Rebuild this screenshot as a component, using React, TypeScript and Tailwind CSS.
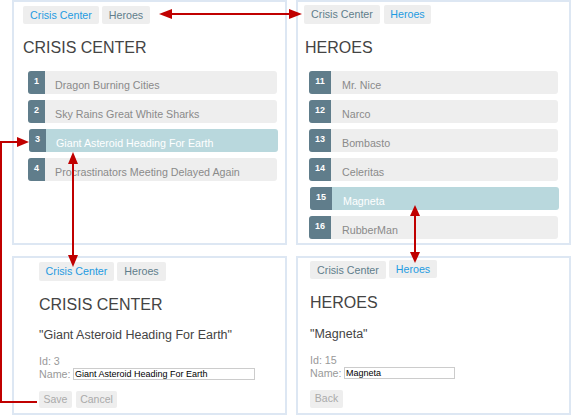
import React from "react";

type Item = { id: number; name: string };

const crises: Item[] = [
  { id: 1, name: "Dragon Burning Cities" },
  { id: 2, name: "Sky Rains Great White Sharks" },
  { id: 3, name: "Giant Asteroid Heading For Earth" },
  { id: 4, name: "Procrastinators Meeting Delayed Again" },
];

const heroes: Item[] = [
  { id: 11, name: "Mr. Nice" },
  { id: 12, name: "Narco" },
  { id: 13, name: "Bombasto" },
  { id: 14, name: "Celeritas" },
  { id: 15, name: "Magneta" },
  { id: 16, name: "RubberMan" },
];

function NavButton({ label, active, w }: { label: string; active?: boolean; w: string }) {
  return (
    <div
      className={`${w} h-full flex items-center justify-center rounded-[2px] bg-[#eeeeee] text-[10.7px] leading-none ${
        active ? "text-[#1e9be1]" : "text-[#607d8b]"
      }`}
    >
      {label}
    </div>
  );
}

function ItemList({ items, selected, badgeW, textGap }: { items: Item[]; selected: number; badgeW: string; textGap: string }) {
  return (
    <ul className="flex flex-col gap-[6px] w-[249px]">
      {items.map((item) => {
        const isSel = item.id === selected;
        return (
          <li
            key={item.id}
            className={`flex h-[23px] rounded-[3px] ${isSel ? "bg-[#b9d8dd] translate-x-px" : "bg-[#eeeeee]"}`}
          >
            <span
              className={`${badgeW} h-full shrink-0 rounded-l-[3px] bg-[#607d8b] text-white text-[9px] font-bold leading-[9px] pt-[6px] text-center`}
            >
              {item.id}
            </span>
            <span
              className={`${textGap} mt-[7.5px] text-[10.7px] leading-[12px] whitespace-nowrap ${
                isSel ? "text-white" : "text-[#8a8a8a]"
              }`}
            >
              {item.name}
            </span>
          </li>
        );
      })}
    </ul>
  );
}

function SmallButton({ label, w }: { label: string; w: string }) {
  return (
    <div className={`${w} h-full flex items-center justify-center rounded-[2px] bg-[#eeeeee] text-[10.5px] text-[#aaaaaa]`}>
      {label}
    </div>
  );
}

export default function App() {
  return (
    <div className="relative w-[571px] h-[417px] bg-white font-['Liberation_Sans',Arial,sans-serif] overflow-hidden">
      <div className="grid grid-cols-[275px_275px] grid-rows-[245px_159px] gap-x-[9px] gap-y-[11px] pl-[12px]">
        {/* Crisis list */}
        <div className="border-2 border-[#dde7f3]">
          <div className="ml-[9px] mt-[4px] h-[18px] flex gap-[3px]">
            <NavButton label="Crisis Center" active w="w-[76px]" />
            <NavButton label="Heroes" w="w-[48px]" />
          </div>
          <h2 className="ml-[9px] mt-[15.5px] text-[16px] leading-none text-[#444444]">CRISIS CENTER</h2>
          <div className="ml-[14px] mt-[15.5px]">
            <ItemList items={crises} selected={3} badgeW="w-[17px]" textGap="ml-[10px]" />
          </div>
        </div>

        {/* Hero list */}
        <div className="border-2 border-[#dde7f3]">
          <div className="ml-[6px] mt-[3px] h-[19px] flex gap-[4px]">
            <NavButton label="Crisis Center" w="w-[76px]" />
            <NavButton label="Heroes" active w="w-[47px]" />
          </div>
          <h2 className="ml-[7px] mt-[15.5px] text-[16px] leading-none text-[#444444]">HEROES</h2>
          <div className="ml-[11px] mt-[15.5px]">
            <ItemList items={heroes} selected={15} badgeW="w-[22px]" textGap="ml-[11px]" />
          </div>
        </div>

        {/* Crisis detail */}
        <div className="border-2 border-[#dde7f3]">
          <div className="ml-[25px] mt-[4px] h-[19px] flex gap-[3px]">
            <NavButton label="Crisis Center" active w="w-[75px]" />
            <NavButton label="Heroes" w="w-[49px]" />
          </div>
          <div className="ml-[25px]">
            <h2 className="mt-[15.5px] text-[16px] leading-none text-[#444444]">CRISIS CENTER</h2>
            <h3 className="mt-[16px] text-[12.5px] leading-none text-[#444444]">"Giant Asteroid Heading For Earth"</h3>
            <div className="mt-[14.4px] text-[10.7px] leading-[12px] text-[#999999]">Id: 3</div>
            <div className="flex items-center h-[13px] text-[10.7px] leading-[12px] text-[#999999]">
              <span>Name:</span>
              <input
                readOnly
                value="Giant Asteroid Heading For Earth"
                className="ml-[2.5px] w-[182px] h-[12px] border border-[#cccccc] bg-white px-[1px] text-[9px] leading-none text-black outline-none"
              />
            </div>
            <div className="mt-[11px] h-[17px] flex gap-[4px]">
              <SmallButton label="Save" w="w-[33px]" />
              <SmallButton label="Cancel" w="w-[41px]" />
            </div>
          </div>
        </div>

        {/* Hero detail */}
        <div className="border-2 border-[#dde7f3]">
          <div className="ml-[12px] mt-[3px] h-[18px] flex gap-[3px]">
            <NavButton label="Crisis Center" w="w-[76px]" />
            <div className="-translate-y-px h-full">
              <NavButton label="Heroes" active w="w-[48px]" />
            </div>
          </div>
          <div className="ml-[12px]">
            <h2 className="mt-[15.5px] text-[16px] leading-none text-[#444444]">HEROES</h2>
            <h3 className="mt-[17px] text-[12.5px] leading-none text-[#444444]">"Magneta"</h3>
            <div className="mt-[14px] text-[10.7px] leading-[12px] text-[#999999]">Id: 15</div>
            <div className="flex items-center h-[13px] text-[10.7px] leading-[12px] text-[#999999]">
              <span>Name:</span>
              <input
                readOnly
                value="Magneta"
                className="ml-[2.5px] w-[111px] h-[12px] border border-[#cccccc] bg-white px-[1px] text-[9px] leading-none text-black outline-none"
              />
            </div>
            <div className="mt-[11px] h-[18px] flex">
              <SmallButton label="Back" w="w-[33px]" />
            </div>
          </div>
        </div>
      </div>

      {/* Annotation arrows */}
      <svg className="absolute inset-0 pointer-events-none" width="571" height="417" viewBox="0 0 571 417">
        <g stroke="#c00000" strokeWidth="2" fill="none">
          <line x1="168" y1="14" x2="293" y2="14" />
          <line x1="73" y1="160" x2="73" y2="259" />
          <line x1="415" y1="213" x2="415" y2="255" />
          <polyline points="37,402 1,402 1,142 20,142" />
        </g>
        <g fill="#c00000">
          <polygon points="159,14 172,9 172,19" />
          <polygon points="302,14 289,9 289,19" />
          <polygon points="73,152 68,164 78,164" />
          <polygon points="73,267 68,255 78,255" />
          <polygon points="415,205 410,216 420,216" />
          <polygon points="415,263 410,252 420,252" />
          <polygon points="29,142 17,137 17,147" />
        </g>
      </svg>
    </div>
  );
}
